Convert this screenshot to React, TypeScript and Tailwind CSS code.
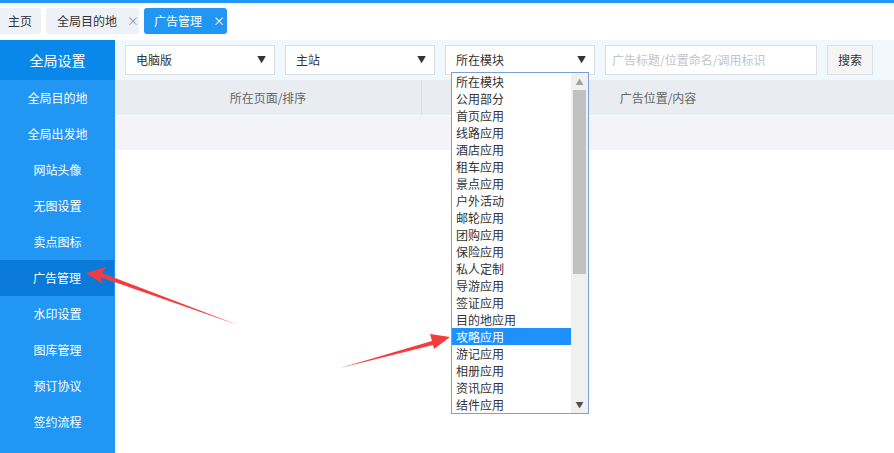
import React from 'react';

const menu = ['全局目的地', '全局出发地', '网站头像', '无图设置', '卖点图标', '广告管理', '水印设置', '图库管理', '预订协议', '签约流程'];

const options = [
  '所在模块', '公用部分', '首页应用', '线路应用', '酒店应用', '租车应用', '景点应用', '户外活动', '邮轮应用', '团购应用',
  '保险应用', '私人定制', '导游应用', '签证应用', '目的地应用', '攻略应用', '游记应用', '相册应用', '资讯应用', '结件应用',
];

const Select: React.FC<{ label: string }> = ({ label }) => (
  <div className="w-[150px] h-[30px] bg-white border border-[#dcdfe6] flex items-center justify-between pl-[10px] pr-[8px] text-[12px] text-[#333]">
    <span>{label}</span>
    <span className="text-[9px] text-[#333]">▼</span>
  </div>
);

export default function App() {
  return (
    <div className="relative w-[894px] h-[453px] overflow-hidden bg-white" style={{ fontFamily: '"Noto Sans CJK SC", "Noto Sans", sans-serif' }}>
      <div className="h-[3px] bg-[#2196f3]" />
      {/* tabs */}
      <div className="h-[37px] flex items-start pt-[5px] gap-[5px] text-[12px] whitespace-nowrap">
        <div className="h-[26px] w-[41px] shrink-0 pl-[8px] bg-[#eef1f8] rounded-r-[3px] flex items-center text-[#333]">主页</div>
        <div className="h-[26px] w-[93px] shrink-0 pl-[11px] bg-[#eef1f8] rounded-[3px] flex items-center text-[#333] gap-[10px]">
          <span>全局目的地</span><span className="text-[#999] text-[12px]">×</span>
        </div>
        <div className="h-[26px] w-[83px] shrink-0 pl-[10px] bg-[#2196f3] rounded-[3px] flex items-center text-white gap-[11px]">
          <span>广告管理</span><span className="text-white text-[12px]">×</span>
        </div>
      </div>
      <div className="flex h-[413px]">
        {/* sidebar */}
        <div className="w-[115px] bg-[#2196f3] text-white shrink-0">
          <div className="h-[40px] bg-[#0a88ea] flex items-center justify-center text-[14px]">全局设置</div>
          {menu.map((m) => (
            <div key={m} className={`h-[36px] flex items-center justify-center text-[12px] ${m === '广告管理' ? 'bg-[#0a7ad9] mr-px' : ''}`}>
              {m}
            </div>
          ))}
        </div>
        {/* main */}
        <div className="flex-1">
          <div className="h-[40px] bg-[#f0f7fd] flex items-center pl-[10px] gap-[10px]">
            <Select label="电脑版" />
            <Select label="主站" />
            <Select label="所在模块" />
            <div className="w-[212px] h-[30px] bg-white border border-[#dcdfe6] flex items-center pl-[6px] text-[12px] text-[#c0c4cc]">
              广告标题/位置命名/调用标识
            </div>
            <div className="w-[46px] h-[30px] bg-[#f5f5f5] border border-[#dcdfe6] flex items-center justify-center text-[12px] text-[#333]">
              搜索
            </div>
          </div>
          <div className="h-[36px] bg-[#e9edf2] flex text-[12px] text-[#666] border-b border-[#f8f8f8]">
            <div className="w-[307px] flex items-center justify-center border-r border-[#dde1e6]">所在页面/排序</div>
            <div className="flex-1 flex items-center justify-center">广告位置/内容</div>
          </div>
          <div className="h-[34px] bg-[#f4f4f8]" />
        </div>
      </div>

      {/* open dropdown list */}
      <div className="absolute left-[451px] top-[72px] w-[138px] h-[342px] bg-white border border-[#7b9fd6] flex text-[12px] text-[#333]">
        <div className="flex-1">
          {options.map((o) => (
            <div key={o} className={`h-[17px] leading-[17px] overflow-hidden pl-[4px] ${o === '攻略应用' ? 'bg-[#1e90ff] text-white' : ''}`}>
              {o}
            </div>
          ))}
        </div>
        <div className="w-[17px] bg-[#f0f0f0] flex flex-col items-center">
          <div className="h-[17px] flex items-center justify-center text-[#a3a3a3] text-[8px]">▲</div>
          <div className="w-[13px] h-[184px] bg-[#c1c1c1]" />
          <div className="flex-1" />
          <div className="h-[17px] flex items-center justify-center text-[#505050] text-[8px]">▼</div>
        </div>
      </div>

      {/* annotation arrows */}
      <svg className="absolute left-0 top-0 pointer-events-none" width="894" height="453">
        <polygon points="238,325 100,277 103,284 86,273 106,267 102,273" fill="#f53c3c" />
        <polygon points="340,368 432,341 430,334 450,337 434,349 433,345" fill="#f53c3c" />
      </svg>
    </div>
  );
}
